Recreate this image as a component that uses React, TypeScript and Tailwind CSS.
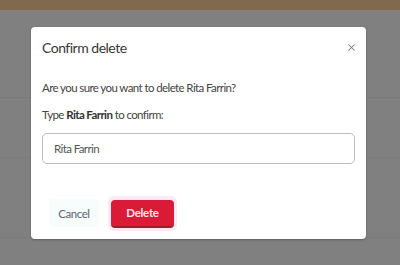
import { X } from "lucide-react";

export default function App() {
  return (
    <div
      className="relative w-[400px] h-[265px] overflow-hidden bg-[#808080]"
      style={{ fontFamily: "Lato, 'Open Sans', sans-serif" }}
    >
      {/* page behind the overlay */}
      <div className="h-[10px] bg-[#80694c]" />
      <div className="flex flex-col">
        <div className="h-[88px] border-b border-[#7a7a7a]" />
        <div className="h-[60px] border-b border-[#7c7c7c]" />
        <div className="h-[80px] border-b border-[#7a7a7a]" />
      </div>

      {/* dialog */}
      <div className="absolute inset-0 flex items-start justify-center pt-[27px] pr-[3px]">
        <div className="w-[335px] h-[212px] rounded-[4px] bg-white shadow-[0_1px_2px_rgba(0,0,0,0.25)] flex flex-col">
          <div className="flex items-center justify-between pl-[11px] pr-[7px] h-[40px]">
            <h2 className="text-[14px] tracking-[-0.5px] text-[#383838]">Confirm delete</h2>
            <button className="text-[#777] w-[16px] h-[16px] flex items-center justify-center">
              <X size={11} strokeWidth={2.2} />
            </button>
          </div>
          <div className="px-[11px] pt-[12px] text-[11.5px] tracking-[-0.6px] text-[#444]">
            <p className="leading-[18px]">Are you sure you want to delete Rita Farrin?</p>
            <p className="leading-[18px] mt-[9px]">
              Type <span className="font-bold text-[#333]">Rita Farrin</span> to confirm:
            </p>
            <div className="mt-[9px] h-[31px] rounded-[5px] border border-[#bdbdbd] flex items-center px-[11px] text-[#555]">
              Rita Farrin
            </div>
          </div>
          <div className="flex items-center pl-[18px] mt-[32px] gap-[9px]">
            <button className="w-[50px] h-[28px] rounded-[3px] bg-[#f7fcfc] text-[11.5px] tracking-[-0.45px] text-[#5d6670]">
              Cancel
            </button>
            <div className="p-[3px] rounded-[6px] bg-[#fde8f6]">
              <button className="w-[63px] h-[28px] rounded-[4px] bg-[#da1b38] border-b-[2px] border-[#9c1f28] text-[11.5px] tracking-[-0.3px] font-bold text-[#ffe4ea]">
                Delete
              </button>
            </div>
          </div>
        </div>
      </div>
    </div>
  );
}
